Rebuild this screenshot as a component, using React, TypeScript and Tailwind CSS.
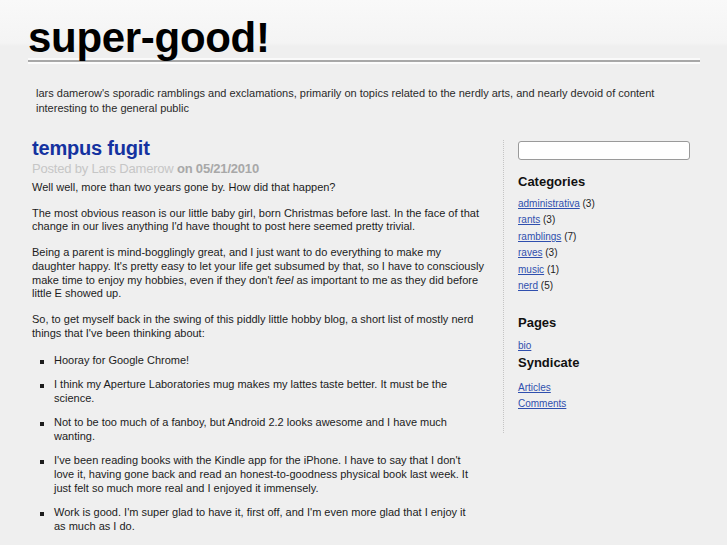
const categories = [
  { name: "administrativa", count: 3 },
  { name: "rants", count: 3 },
  { name: "ramblings", count: 7 },
  { name: "raves", count: 3 },
  { name: "music", count: 1 },
  { name: "nerd", count: 5 },
];

// line breaks kept where the original page wrapped
const thoughts: React.ReactNode[] = [
  "Hooray for Google Chrome!",
  "I think my Aperture Laboratories mug makes my lattes taste better. It must be the science.",
  "Not to be too much of a fanboy, but Android 2.2 looks awesome and I have much wanting.",
  <>
    I've been reading books with the Kindle app for the iPhone. I have to say that I don't
    <br />
    love it, having gone back and read an honest-to-goodness physical book last week. It
    <br />
    just felt so much more real and I enjoyed it immensely.
  </>,
  <>
    Work is good. I'm super glad to have it, first off, and I'm even more glad that I enjoy it
    <br />
    as much as I do.
  </>,
];

function Sidebar() {
  return (
    <aside className="ml-[15px] mt-[3px] w-[209px] border-l border-dotted border-[#c4c4c4] pb-[20px] pl-[14px] pt-[1px]">
      <input
        type="text"
        className="block h-[19px] w-[172px] rounded-[3px] border border-[#9a9a9a] bg-white px-1 text-[11px] outline-none"
      />

      <h3 className="mt-[14px] text-[13px] font-bold leading-[16px] text-[#111]">Categories</h3>
      <ul className="mt-[6px] text-[10px] leading-[16.4px] text-[#222]">
        {categories.map((c) => (
          <li key={c.name}>
            <a href="#" className="text-[#2f4fae] underline">
              {c.name}
            </a>{" "}
            ({c.count})
          </li>
        ))}
      </ul>

      <h3 className="mt-[21px] text-[13px] font-bold leading-[16px] text-[#111]">Pages</h3>
      <div className="mt-[7px] text-[10px] leading-[16.4px]">
        <a href="#" className="text-[#2f4fae] underline">
          bio
        </a>
      </div>

      <h3 className="text-[13px] font-bold leading-[16px] text-[#111]">Syndicate</h3>
      <ul className="mt-[9px] text-[10px] leading-[16.4px]">
        <li>
          <a href="#" className="text-[#2f4fae] underline">
            Articles
          </a>
        </li>
        <li>
          <a href="#" className="text-[#2f4fae] underline">
            Comments
          </a>
        </li>
      </ul>
    </aside>
  );
}

function Post() {
  return (
    <article className="w-[456px]">
      <h2 className="text-[20px] font-bold leading-[22px] tracking-[-0.2px] text-[#1432a0]">tempus fugit</h2>
      <div className="mt-[1.5px] text-[13px] leading-[16px] tracking-[-0.2px] text-[#c6c6c6]">
        Posted by Lars Damerow <span className="font-bold text-[#a8a8a8]">on 05/21/2010</span>
      </div>

      <div className="mt-[4px] text-[11px] leading-[13.7px] text-[#1c1c1c]">
        <p>Well well, more than two years gone by. How did that happen?</p>
        <p className="mt-[12.3px]">
          The most obvious reason is our little baby girl, born Christmas before last. In the face of that
          change in our lives anything I'd have thought to post here seemed pretty trivial.
        </p>
        <p className="mt-[12.3px]">
          Being a parent is mind-bogglingly great, and I just want to do everything to make my
          <br />
          daughter happy. It's pretty easy to let your life get subsumed by that, so I have to consciously
          make time to enjoy my hobbies, even if they don't <em>feel</em> as important to me as they did before
          little E showed up.
        </p>
        <p className="mt-[12.3px]">
          So, to get myself back in the swing of this piddly little hobby blog, a short list of mostly nerd
          things that I've been thinking about:
        </p>
        <ul className="ml-[8px] mt-[13.5px] flex flex-col gap-[10.5px]">
          {thoughts.map((t, i) => (
            <li key={i} className="flex">
              <span className="mt-[6px] h-[4px] w-[4px] shrink-0 bg-[#1c1c1c]" />
              <span className="ml-[10px]">{t}</span>
            </li>
          ))}
        </ul>
      </div>
    </article>
  );
}

export default function App() {
  return (
    <div className="min-h-screen bg-[#efefef] font-['Liberation_Sans',Arial,sans-serif]">
      <header className="bg-[linear-gradient(to_bottom,#f9f9f9_0px,#f4f4f4_43px,#efefef_46px)]">
        <h1 className="pl-[28px] pt-[18px] text-[42px] font-bold leading-[40px] tracking-[-0.3px] text-black">
          super-good!
        </h1>
        <div className="ml-[28px] w-[672px]">
          <div className="h-[2px] bg-white/70" />
          <div className="h-[2px] bg-[#a8a8a8]" />
          <div className="h-[2px] bg-white/80" />
        </div>
        <p className="pl-[36px] pr-[27px] pt-[22px] text-[11px] leading-[15px] text-[#2a2a2a]">
          lars damerow's sporadic ramblings and exclamations, primarily on topics related to the nerdly arts, and
          nearly devoid of content interesting to the general public
        </p>
      </header>

      <div className="flex items-start pl-[32px] pt-[21px]">
        <Post />
        <Sidebar />
      </div>
    </div>
  );
}
